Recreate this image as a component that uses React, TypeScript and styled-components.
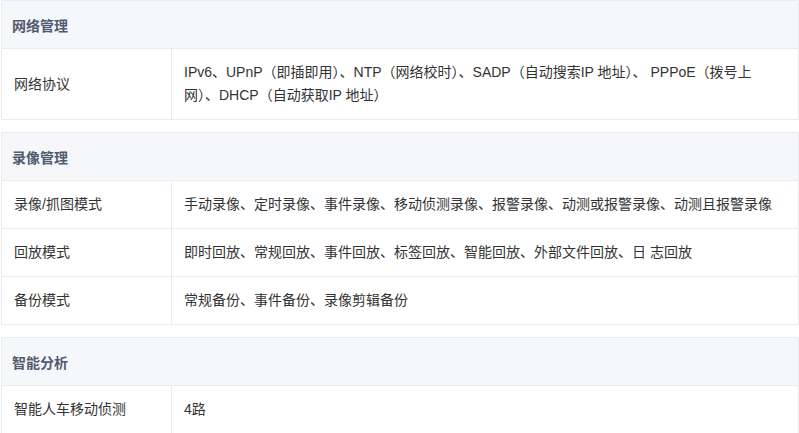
import styled, { createGlobalStyle } from 'styled-components';

const GlobalStyle = createGlobalStyle`
  html, body {
    margin: 0;
    padding: 0;
    background: #fff;
  }
  body {
    font-family: "Liberation Sans", Arial, "Noto Sans CJK SC", sans-serif;
    font-size: 14px;
    color: #333;
  }
`;

const Page = styled.div`
  display: flex;
  flex-direction: column;
  gap: 12px;
  width: 798px;
  padding-left: 1px;
`;

const SpecTable = styled.table`
  width: 100%;
  border-collapse: collapse;
  table-layout: fixed;
`;

const LabelCol = styled.col`
  width: 170px;
`;

const HeadCell = styled.th`
  height: 47px;
  padding: 0 10px;
  background: #f6f7fb;
  border: 1px solid #e9ebf1;
  text-align: left;
  font-weight: bold;
  color: #515a6e;
  font-size: 14px;
`;

const Cell = styled.td`
  padding: 12px 12px;
  border: 1px solid #e9ebf1;
  line-height: 23px;
  vertical-align: middle;
  color: #333;
`;

type Section = {
  title: string;
  rows: [string, string][];
};

const sections: Section[] = [
  {
    title: '网络管理',
    rows: [
      [
        '网络协议',
        'IPv6、UPnP（即插即用）、NTP（网络校时）、SADP（自动搜索IP 地址）、 PPPoE（拨号上网）、DHCP（自动获取IP 地址）',
      ],
    ],
  },
  {
    title: '录像管理',
    rows: [
      ['录像/抓图模式', '手动录像、定时录像、事件录像、移动侦测录像、报警录像、动测或报警录像、动测且报警录像'],
      ['回放模式', '即时回放、常规回放、事件回放、标签回放、智能回放、外部文件回放、日 志回放'],
      ['备份模式', '常规备份、事件备份、录像剪辑备份'],
    ],
  },
  {
    title: '智能分析',
    rows: [['智能人车移动侦测', '4路']],
  },
];

export default function App() {
  return (
    <>
      <GlobalStyle />
      <Page>
        {sections.map((s) => (
          <SpecTable key={s.title}>
            <colgroup>
              <LabelCol />
              <col />
            </colgroup>
            <thead>
              <tr>
                <HeadCell colSpan={2}>{s.title}</HeadCell>
              </tr>
            </thead>
            <tbody>
              {s.rows.map(([label, value]) => (
                <tr key={label}>
                  <Cell>{label}</Cell>
                  <Cell>{value}</Cell>
                </tr>
              ))}
            </tbody>
          </SpecTable>
        ))}
      </Page>
    </>
  );
}
